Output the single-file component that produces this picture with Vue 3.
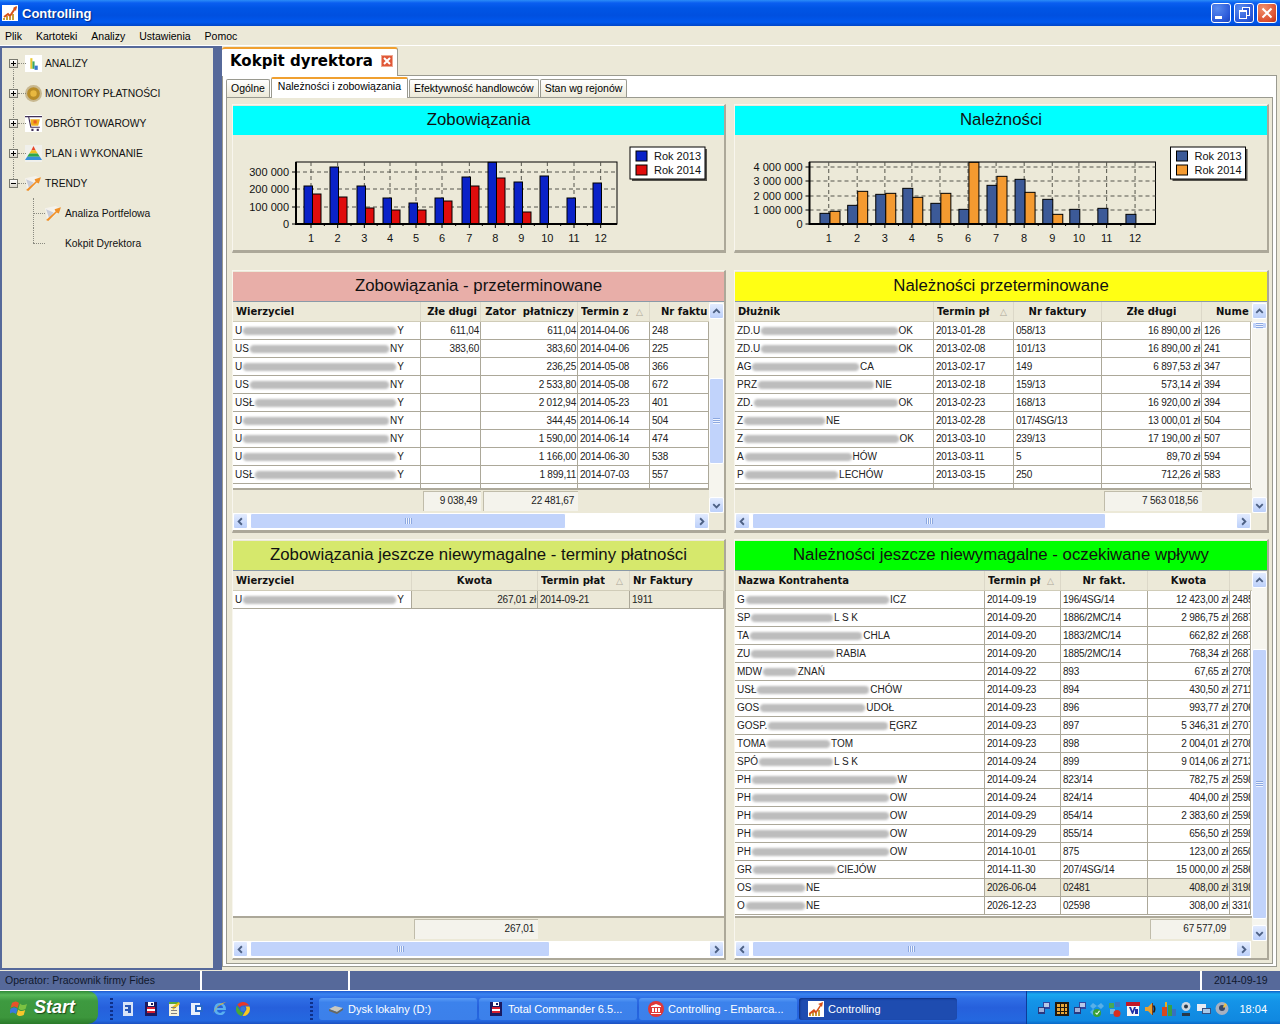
<template>
  <div class="window">
    <header class="titlebar">
      <svg class="title-icon" viewBox="0 0 16 16">
        <rect width="16" height="16" fill="#fff" />
        <path d="M1 13h2v2H1zM4 11h2v4H4zM7 12h2v3H7zM10 9h2v6h-2z" fill="#c8a038" />
        <path d="M2 12l4-3 2 2 6-9" fill="none" stroke="#d85018" stroke-width="2" />
        <path d="M15 1l-1 5-3-3z" fill="#d85018" />
      </svg>
      <span class="title-text">Controlling</span>
      <div class="win-buttons">
        <button class="win-btn"><span class="min-mark"></span></button>
        <button class="win-btn"><span class="max-mark"></span></button>
        <button class="win-btn close">
          <svg viewBox="0 0 12 12"><path d="M1.5 1.5l9 9M10.5 1.5l-9 9" stroke="#fff" stroke-width="2" /></svg>
        </button>
      </div>
    </header>

    <nav class="menubar">
      <span v-for="item in menu" :key="item" class="menu-item">{{ item }}</span>
    </nav>

    <div class="workspace">
      <aside class="tree">
        <div v-for="node in tree" :key="node.label" class="tree-row" :class="{ child: node.child, last: node.last }">
          <span v-if="!node.child" class="expander">
            <i class="hbar"></i><i v-if="node.closed" class="vbar"></i>
          </span>
          <svg v-if="node.icon" class="tree-icon" viewBox="0 0 16 16">
            <path v-for="(p, i) in treeIcons[node.icon]" :key="i" :d="p[1]" :fill="p[0]" />
          </svg>
          <span v-else class="tree-icon"></span>
          <span class="tree-label">{{ node.label }}</span>
        </div>
      </aside>

      <main class="main">
        <div class="doc-tabs">
          <div class="doc-tab">
            <span>Kokpit dyrektora</span>
            <svg class="doc-close" viewBox="0 0 12 12">
              <rect width="12" height="12" fill="#f0a890" />
              <rect x="1" y="1" width="10" height="10" fill="#e05838" />
              <path d="M3 3l6 6M9 3l-6 6" stroke="#fff" stroke-width="2" />
            </svg>
          </div>
        </div>

        <section class="page">
          <div class="sub-tabs">
            <span v-for="tab in subTabs" :key="tab.label" class="sub-tab" :class="{ active: tab.active }">{{ tab.label }}</span>
          </div>

          <div class="dashboard">
            <article v-for="chart in charts" :key="chart.title" class="panel chart-panel">
              <h3 class="panel-title" :style="{ background: chart.color }">{{ chart.title }}</h3>
              <svg class="chart" :viewBox="chart.viewBox">
                <rect :x="chart.plot[0]" y="162" :width="chart.plot[1] - chart.plot[0]" height="62" fill="none" stroke="#000" />
                <line v-for="y in chart.yTicks" :key="'g' + y.label" :x1="chart.plot[0]" :x2="chart.plot[1]" :y1="y.y" :y2="y.y" class="grid-line" />
                <line v-for="x in chart.months" :key="'v' + x.label" :x1="x.x" :x2="x.x" y1="162" y2="224" class="grid-line" />
                <g v-for="bar in chart.bars" :key="bar.key">
                  <rect :x="bar.x" :y="bar.y" :width="bar.w" :height="224 - bar.y" :fill="bar.fill" stroke="#000" stroke-width="1" />
                </g>
                <line v-for="x in chart.months" :key="'t' + x.label" :x1="x.x" :x2="x.x" y1="224" y2="228" stroke="#000" />
                <line v-for="x in chart.minor" :key="'m' + x" :x1="x" :x2="x" y1="224" y2="226" stroke="#000" />
                <line v-for="y in chart.yTicks" :key="'k' + y.label" :x1="chart.plot[0] - 4" :x2="chart.plot[0]" :y1="y.y" :y2="y.y" stroke="#000" />
                <path :d="`M${chart.plot[0]} 162V224H${chart.plot[1]}`" fill="none" stroke="#000" stroke-width="2" />
                <text v-for="y in chart.yTicks" :key="'l' + y.label" :x="chart.plot[0] - 7" :y="y.y + 4" text-anchor="end" class="axis-text">{{ y.label }}</text>
                <text v-for="x in chart.months" :key="'n' + x.label" :x="x.x" y="242" text-anchor="middle" class="axis-text">{{ x.label }}</text>
                <g>
                  <rect :x="chart.legendX + 2" y="149" :width="chart.legendW" height="32" fill="#55534c" />
                  <rect :x="chart.legendX" y="147" :width="chart.legendW" height="32" fill="#fff" stroke="#000" />
                  <rect :x="chart.legendX + 6" y="151" width="11" height="10" :fill="chart.colors[0]" stroke="#000" />
                  <rect :x="chart.legendX + 6" y="165" width="11" height="10" :fill="chart.colors[1]" stroke="#000" />
                  <text :x="chart.legendX + 24" y="160" class="axis-text">Rok 2013</text>
                  <text :x="chart.legendX + 24" y="174" class="axis-text">Rok 2014</text>
                </g>
              </svg>
            </article>

            <article v-for="table in tables" :key="table.title" class="panel table-panel" :class="table.rowClass">
              <h3 class="panel-title" :style="{ background: table.color }">{{ table.title }}</h3>
              <div class="tbl">
                <div class="tbl-main">
                  <div class="tbl-head" :style="gridOf(table)">
                    <div v-for="col in table.cols" :key="col.label" class="th" :class="col.head">
                      <span class="th-label">{{ col.label }}</span>
                      <span v-if="col.sort" class="sort-mark">△</span>
                    </div>
                  </div>
                  <div class="tbl-body">
                    <div v-for="(row, r) in table.rows" :key="r" class="tr" :class="{ selected: r === table.selected }" :style="gridOf(table)">
                      <div class="td name">
                        <span class="masked" :style="{ width: row[0][2] + 'px' }">
                          <span>{{ row[0][0] }}</span><i class="smear"></i><span>{{ row[0][1] }}</span>
                        </span>
                      </div>
                      <div v-for="(cell, c) in row.slice(1)" :key="c" class="td" :class="table.cols[c + 1].align">{{ cell }}</div>
                    </div>
                  </div>
                  <div class="tbl-foot" :style="gridOf(table)">
                    <div v-for="(col, c) in table.cols" :key="c" class="foot-slot">
                      <span v-if="table.totals[c]" class="foot-sum">{{ table.totals[c] }}</span>
                    </div>
                  </div>
                </div>
                <div v-if="table.vthumb" class="vscroll">
                  <span class="sb-btn">
                    <svg viewBox="0 0 14 14"><path d="M3.5 8.5L7 5l3.5 3.5" class="chev" /></svg>
                  </span>
                  <div class="vtrack">
                    <span class="vthumb" :style="{ marginTop: table.vthumb[0] + 'px', height: table.vthumb[1] + 'px' }"><i></i></span>
                  </div>
                  <span class="sb-btn">
                    <svg viewBox="0 0 14 14"><path d="M3.5 5.5L7 9l3.5-3.5" class="chev" /></svg>
                  </span>
                </div>
              </div>
              <div class="hscroll" :style="{ width: table.hwidth + 'px' }">
                <span class="sb-btn">
                  <svg viewBox="0 0 14 14"><path d="M8.5 3.5L5 7l3.5 3.5" class="chev" /></svg>
                </span>
                <div class="htrack">
                  <span class="hthumb" :style="{ width: table.hthumb + 'px' }"><i></i></span>
                </div>
                <span class="sb-btn">
                  <svg viewBox="0 0 14 14"><path d="M5.5 3.5L9 7l-3.5 3.5" class="chev" /></svg>
                </span>
              </div>
            </article>
          </div>
        </section>
      </main>
    </div>

    <footer class="statusbar">
      <span class="status-cell op">Operator: Pracownik firmy Fides</span>
      <span class="status-cell mid"></span>
      <span class="status-cell fill"></span>
      <span class="status-cell date">2014-09-19</span>
    </footer>

    <div class="taskbar">
      <button class="start">
        <svg class="flag" viewBox="0 0 20 20">
          <path d="M2 5c3-2 5-2 7 0l-1.5 5c-2-2-4-2-7 0z" fill="#e8522a" />
          <path d="M10 5.5c2 2 4 2 7 .5l-1.5 5c-3 1.5-5 1.5-7-.5z" fill="#7cc242" />
          <path d="M.5 11c3-2 5-2 7 0L6 16c-2-2-4-2-7 0z" fill="#3a7ae0" />
          <path d="M8.2 11.5c2 2 4 2 7 .5l-1.5 5c-3 1.5-5 1.5-7-.5z" fill="#f6c62c" />
        </svg>
        <span>Start</span>
      </button>
      <span class="grip first"></span>
      <div class="quick">
        <svg v-for="(icon, i) in quickIcons" :key="i" class="q-icon" viewBox="0 0 16 16">
          <path v-for="(p, j) in icon" :key="j" :d="p[1]" :fill="p[0]" />
        </svg>
      </div>
      <span class="grip"></span>
      <div class="tasks">
        <div v-for="task in tasks" :key="task.label" class="task" :class="{ active: task.active }">
          <svg class="task-icon" viewBox="0 0 16 16">
            <path v-for="(p, j) in task.icon" :key="j" :d="p[1]" :fill="p[0]" />
          </svg>
          <span class="task-label">{{ task.label }}</span>
        </div>
      </div>
      <div class="tray">
        <svg v-for="(icon, i) in trayIcons" :key="i" class="tray-icon" viewBox="0 0 16 16">
          <path v-for="(p, j) in icon" :key="j" :d="p[1]" :fill="p[0]" />
        </svg>
        <span class="clock">18:04</span>
      </div>
    </div>
  </div>
</template>

<script setup>
const menu = ['Plik', 'Kartoteki', 'Analizy', 'Ustawienia', 'Pomoc']

const tree = [
  { label: 'ANALIZY', icon: 'analizy', closed: true },
  { label: 'MONITORY PŁATNOŚCI', icon: 'monitor', closed: true },
  { label: 'OBRÓT TOWAROWY', icon: 'cart', closed: true },
  { label: 'PLAN i WYKONANIE', icon: 'plan', closed: true },
  { label: 'TRENDY', icon: 'trend' },
  { label: 'Analiza Portfelowa', icon: 'trend', child: true },
  { label: 'Kokpit Dyrektora', child: true, last: true }
]

const treeIcons = {
  analizy: [
    ['#fff', 'M0 0h16v16H0z'],
    ['#e8c830', 'M5 3h2v10H5z'],
    ['#38a860', 'M7 6h2v7H7z'],
    ['#3878d0', 'M9 10h3v4H9z']
  ],
  monitor: [
    ['#c8b890', 'M8 0a8 8 0 1 0 0 16A8 8 0 0 0 8 0z'],
    ['#b88c28', 'M8 2a6 6 0 1 0 0 12A6 6 0 0 0 8 2z'],
    ['#e8b840', 'M8 5a3 3 0 1 0 0 6 3 3 0 0 0 0-6z']
  ],
  cart: [
    ['#fff', 'M0 0h16v16H0z'],
    ['#403058', 'M0 1h16v1H0zM3 2h1l2 9h8v1H5zM6 13h2v2H6zM11 13h2v2h-2z'],
    ['#f0b020', 'M5 4h9l-1.5 6H6z'],
    ['#e86020', 'M8 5h3v3H8z']
  ],
  plan: [
    ['#f0f0ec', 'M0 0h16v16H0z'],
    ['#e84828', 'M8 1l2 4H6z'],
    ['#f0c020', 'M6 5h4l2 3H4z'],
    ['#30a848', 'M4 8h8l2 3H2z'],
    ['#3890d8', 'M2 11h12l2 3H0z']
  ],
  trend: [
    ['#f4f2ec', 'M0 3l10-2 4 2-6 8-6 3z'],
    ['#c8ccd8', 'M1 4l7 3-4 6z'],
    ['#f09028', 'M1 14l9-8-1-2 6-2-2 6-2-1-8 8z']
  ]
}

const subTabs = [
  { label: 'Ogólne' },
  { label: 'Należności i zobowiązania', active: true },
  { label: 'Efektywność handlowców' },
  { label: 'Stan wg rejonów' }
]

// charts are kept in screen coordinates, viewBox maps them onto the panel body
function buildChart(cfg) {
  const bars = []
  cfg.starts.forEach((x, i) => {
    bars.push({ key: 'a' + i, x, y: cfg.first[i], w: cfg.barW, fill: cfg.colors[0] })
    if (cfg.second[i]) bars.push({ key: 'b' + i, x: x + cfg.barW, y: cfg.second[i], w: cfg.barW, fill: cfg.colors[1] })
  })
  const months = cfg.centers.map((x, i) => ({ x, label: String(i + 1) }))
  const minor = []
  for (let i = 0; i < months.length - 1; i++) minor.push((months[i].x + months[i + 1].x) / 2)
  return { ...cfg, bars, months, minor }
}

const leftX = v => 226 + v / 3
const rightX = v => 730 + v / 2.85
const topY = v => 100 + v / 3

const charts = [
  buildChart({
    title: 'Zobowiązania',
    color: '#00ffff',
    viewBox: '233 135 491 115',
    plot: [296, 617],
    colors: ['#0a22c8', '#e00c0c'],
    legendX: 630,
    legendW: 75,
    barW: 8.5,
    yTicks: [
      { y: 172, label: '300 000' },
      { y: 189, label: '200 000' },
      { y: 207, label: '100 000' },
      { y: 224, label: '0' }
    ],
    starts: [234, 312, 393, 471, 549, 627, 708, 786, 864, 942, 1023, 1101].map(leftX),
    centers: [255, 335, 415, 492, 570, 648, 730, 808, 886, 964, 1044, 1124].map(leftX),
    first: [258, 201, 258, 294, 309, 294, 231, 187, 246, 228, 294, 249].map(topY),
    second: [282, 291, 324, 330, 330, 303, 258, 234, 336].map(topY)
  }),
  buildChart({
    title: 'Należności',
    color: '#00ffff',
    viewBox: '735 135 531 115',
    plot: [809, 1155],
    colors: ['#3c5a98', '#f49a30'],
    legendX: 1170,
    legendW: 75,
    barW: 10,
    yTicks: [
      { y: 167, label: '4 000 000' },
      { y: 181, label: '3 000 000' },
      { y: 196, label: '2 000 000' },
      { y: 210, label: '1 000 000' },
      { y: 224, label: '0' }
    ],
    starts: [255, 334, 414, 491, 571, 651, 731, 811, 890, 967, 1047, 1127].map(rightX),
    centers: [280, 361, 440, 517, 597, 677, 757, 837, 917, 993, 1072, 1153].map(rightX),
    first: [340, 316, 283, 265, 310, 328, 256, 238, 298, 328, 325, 343].map(topY),
    second: [334, 274, 280, 292, 280, 187, 229, 277, 343].map(topY)
  })
]

const tables = [
  {
    title: 'Zobowiązania - przeterminowane',
    color: '#e8aea8',
    rowClass: 'row-mid',
    cols: [
      { label: 'Wierzyciel', w: 188, head: 'left' },
      { label: 'Złe długi', w: 60, align: 'right', head: 'right' },
      { label: 'Zator  płatniczy', w: 97, align: 'right', head: 'right' },
      { label: 'Termin z', w: 72, sort: true, head: 'left' },
      { label: 'Nr faktu', w: 59, head: 'clip' }
    ],
    rows: [
      [['U', 'Y', 169], '611,04', '611,04', '2014-04-06', '248'],
      [['US', 'NY', 169], '383,60', '383,60', '2014-04-06', '225'],
      [['U', 'Y', 169], '', '236,25', '2014-05-08', '366'],
      [['US', 'NY', 169], '', '2 533,80', '2014-05-08', '672'],
      [['USŁ', 'Y', 169], '', '2 012,94', '2014-05-23', '401'],
      [['U', 'NY', 169], '', '344,45', '2014-06-14', '504'],
      [['U', 'NY', 169], '', '1 590,00', '2014-06-14', '474'],
      [['U', 'Y', 169], '', '1 166,00', '2014-06-30', '538'],
      [['USŁ', 'Y', 169], '', '1 899,11', '2014-07-03', '557'],
      [['', '', 0], '', '', '', '']
    ],
    totals: { 1: '9 038,49', 2: '22 481,67' },
    vthumb: [59, 86],
    hwidth: 476,
    hthumb: 316
  },
  {
    title: 'Należności przeterminowane',
    color: '#ffff14',
    rowClass: 'row-mid',
    cols: [
      { label: 'Dłużnik', w: 199, head: 'left' },
      { label: 'Termin pł', w: 80, sort: true, head: 'left' },
      { label: 'Nr faktury', w: 88, head: 'center' },
      { label: 'Złe długi', w: 100, align: 'right', head: 'center' },
      { label: 'Nume', w: 49, head: 'clip far' }
    ],
    rows: [
      [['ZD.U', 'OK', 176], '2013-01-28', '058/13', '16 890,00 zł', '126'],
      [['ZD.U', 'OK', 176], '2013-02-08', '101/13', '16 890,00 zł', '241'],
      [['AG', 'CA', 137], '2013-02-17', '149', '6 897,53 zł', '347'],
      [['PRZ', 'NIE', 155], '2013-02-18', '159/13', '573,14 zł', '394'],
      [['ZD.', 'OK', 176], '2013-02-23', '168/13', '16 920,00 zł', '394'],
      [['Z', 'NE', 103], '2013-02-28', '017/4SG/13', '13 000,01 zł', '504'],
      [['Z', 'OK', 177], '2013-03-10', '239/13', '17 190,00 zł', '507'],
      [['A', 'HÓW', 140], '2013-03-11', '5', '89,70 zł', '594'],
      [['P', 'LECHÓW', 146], '2013-03-15', '250', '712,26 zł', '583'],
      [['', '', 0], '', '', '', '']
    ],
    totals: { 3: '7 563 018,56' },
    vthumb: [3, 7],
    hwidth: 516,
    hthumb: 354
  },
  {
    title: 'Zobowiązania jeszcze niewymagalne - terminy płatności',
    color: '#d6e86c',
    rowClass: 'row-low',
    cols: [
      { label: 'Wierzyciel', w: 179, head: 'left' },
      { label: 'Kwota', w: 126, align: 'right', head: 'center' },
      { label: 'Termin płat', w: 92, sort: true, head: 'left' },
      { label: 'Nr Faktury', w: 94, head: 'left' }
    ],
    rows: [[['U', 'Y', 169], '267,01 zł', '2014-09-21', '1911']],
    selected: 0,
    totals: { 1: '267,01' },
    hwidth: 491,
    hthumb: 300
  },
  {
    title: 'Należności jeszcze niewymagalne - oczekiwane wpływy',
    color: '#00ff00',
    rowClass: 'row-low',
    cols: [
      { label: 'Nazwa Kontrahenta', w: 250, head: 'left' },
      { label: 'Termin pł', w: 76, sort: true, head: 'left' },
      { label: 'Nr fakt.', w: 87, head: 'center' },
      { label: 'Kwota', w: 82, align: 'right', head: 'center' },
      { label: '', w: 21, head: 'clip' }
    ],
    rows: [
      [['G', 'ICZ', 169], '2014-09-19', '196/4SG/14', '12 423,00 zł', '2485'],
      [['SP', 'L S K', 121], '2014-09-20', '1886/2MC/14', '2 986,75 zł', '2687'],
      [['TA', 'CHLA', 153], '2014-09-20', '1883/2MC/14', '662,82 zł', '2687'],
      [['ZU', 'RABIA', 129], '2014-09-20', '1885/2MC/14', '768,34 zł', '2687'],
      [['MDW', 'ZNAŃ', 88], '2014-09-22', '893', '67,65 zł', '2705'],
      [['USŁ', 'CHÓW', 165], '2014-09-23', '894', '430,50 zł', '2711'],
      [['GOS', 'UDOŁ', 157], '2014-09-23', '896', '993,77 zł', '2706'],
      [['GOSP.', 'ĘGRZ', 180], '2014-09-23', '897', '5 346,31 zł', '2707'],
      [['TOMA', 'TOM', 116], '2014-09-23', '898', '2 004,01 zł', '2708'],
      [['SPÓ', 'L S K', 121], '2014-09-24', '899', '9 014,06 zł', '2713'],
      [['PH', 'W', 170], '2014-09-24', '823/14', '782,75 zł', '2598'],
      [['PH', 'OW', 170], '2014-09-24', '824/14', '404,00 zł', '2598'],
      [['PH', 'OW', 170], '2014-09-29', '854/14', '2 383,60 zł', '2598'],
      [['PH', 'OW', 170], '2014-09-29', '855/14', '656,50 zł', '2598'],
      [['PH', 'OW', 170], '2014-10-01', '875', '123,00 zł', '2650'],
      [['GR', 'CIEJÓW', 139], '2014-11-30', '207/4SG/14', '15 000,00 zł', '2586'],
      [['OS', 'NE', 83], '2026-06-04', '02481', '408,00 zł', '3198'],
      [['O', 'NE', 83], '2026-12-23', '02598', '308,00 zł', '3310']
    ],
    selected: 16,
    totals: { 3: '67 577,09' },
    vthumb: [61, 270],
    hwidth: 516,
    hthumb: 318
  }
]

function gridOf(table) {
  return { gridTemplateColumns: table.cols.map(c => c.w + 'px').join(' ') }
}

const floppy = [
  ['#1a1a60', 'M2 1h12v14H2z'],
  ['#fff', 'M5 1h6v4H5zM4 8h8v2H4z'],
  ['#d82030', 'M4 10h8v2H4zM4 6h8v2H4z'],
  ['#1a1a60', 'M8 2h2v2H8z']
]
const appIcon = [
  ['#fff', 'M0 0h16v16H0z'],
  ['#c8a038', 'M1 13h2v2H1zM4 11h2v4H4zM7 12h2v3H7zM10 9h2v6h-2z'],
  ['#d85018', 'M1 12l5-4 2 2 4-6-2-1 5-2-1 5-1-1-5 8-2-2-5 3z']
]
const netIcon = [
  ['#3048a0', 'M7 1h7v7H7z'],
  ['#b8c8e8', 'M8 2h5v4H8z'],
  ['#283880', 'M2 6h7v7H2z'],
  ['#a0b0d8', 'M3 7h5v4H3z']
]

const quickIcons = [
  [['#d8e4f8', 'M3 1h10v14H3z'], ['#2858b8', 'M5 4h6v2H5zM5 8h6v2H5zM8 5h3v7H8z']],
  floppy,
  [['#f4f0d8', 'M3 2h10v13H3z'], ['#58a838', 'M3 1h10v2H3z'], ['#e8c020', 'M6 6l7-5 1 2-7 6z'], ['#808080', 'M5 6h5v1H5zM5 9h6v1H5zM5 12h6v1H5z']],
  [['#e8f0fc', 'M2 2h9v12H2z'], ['#2868c8', 'M6 4h8v7H6z'], ['#f8f8f8', 'M8 6h4v3H8z']],
  [['#5ab0f0', 'M8 2a6 6 0 1 0 5.5 8.5h-3a3 3 0 0 1-5.5-1.5h9A6 6 0 0 0 8 2zM5 7a3 3 0 0 1 6 0z'], ['#e0b030', 'M1 13c2-7 8-12 14-12-2 0-3 1-4 2-4 1-8 5-10 10z']],
  [['#e83828', 'M8 1a7 7 0 0 1 6.1 3.5H8A3.5 3.5 0 0 0 4.8 6.5L2.3 3.5A7 7 0 0 1 8 1z'], ['#48a838', 'M2 4.5l3 5a3.5 3.5 0 0 0 3.5 2L6.5 15A7 7 0 0 1 2 4.5z'], ['#f8c820', 'M15 8a7 7 0 0 1-7.5 7l3-5a3.5 3.5 0 0 0 0-4.5h4A7 7 0 0 1 15 8z'], ['#3878d8', 'M8 5.5a2.5 2.5 0 1 0 0 5 2.5 2.5 0 0 0 0-5z']]
]

const tasks = [
  { label: 'Dysk lokalny (D:)', icon: [['#c8c8c0', 'M1 8l6-3 8 2-6 4z'], ['#686860', 'M1 8l8 3v2l-8-3zM9 11l6-4v2l-6 4z']] },
  { label: 'Total Commander 6.5...', icon: floppy },
  { label: 'Controlling - Embarca...', icon: [['#e03838', 'M8 0a8 8 0 1 0 0 16A8 8 0 0 0 8 0z'], ['#fff', 'M3 5l5-2 5 2v1H3zM4 7h2v4H4zM7 7h2v4H7zM10 7h2v4h-2zM3 12h10v1H3z']] },
  { label: 'Controlling', icon: appIcon, active: true }
]

const trayIcons = [
  netIcon,
  [['#201810', 'M1 1h14v14H1z'], ['#e8a838', 'M3 3h3v3H3zM7 3h3v3H7zM11 3h2v3h-2zM3 7h3v3H3zM7 7h3v3H7zM11 7h2v3h-2zM3 11h3v2H3zM7 11h3v2H7zM11 11h2v2h-2z']],
  netIcon,
  [['#58b0e8', 'M4 2l4 3-4 3-3-3zM12 2l3 3-3 3-4-3zM4 8l4 3-4 3-3-3z'], ['#38a038', 'M8 16a4 4 0 1 0 0-8 4 4 0 0 0 0 8z'], ['#fff', 'M6 12l2 2 3-4-1-.5-2 3-1-1z']],
  [['#48a858', 'M2 2h5v5H2z'], ['#3878c8', 'M8 1h5v5H8z'], ['#70b8e0', 'M3 8h5v5H3z'], ['#d83020', 'M10 9a3.5 3.5 0 1 0 0 7 3.5 3.5 0 0 0 0-7z']],
  [['#c01828', 'M1 1h14v4H1z'], ['#f8f8f8', 'M2 5h12v10H2z'], ['#2030a8', 'M4 6l3 7h1l3-7-2 0-1.5 4L6 6zM10 8h3v5h-3z']],
  [['#e8a030', 'M2 6h3l4-4v12l-4-4H2z'], ['#803818', 'M9 2h1v12H9z'], ['#281810', 'M11 4c2 2 2 6 0 8l-1-1c1-2 1-4 0-6z']],
  [['#e8b020', 'M4 1h2v5H4z'], ['#d84820', 'M1 6h5v9H1z'], ['#38a048', 'M7 4h4v11H7z'], ['#3870c0', 'M11 8h4v7h-4z']],
  [['#d0d8e0', 'M8 1a4.5 4.5 0 1 0 0 9 4.5 4.5 0 0 0 0-9z'], ['#283848', 'M8 3.5a2 2 0 1 0 0 4 2 2 0 0 0 0-4zM4 12h8v3H4z']],
  [['#e8ecf4', 'M1 3h9v7H1z'], ['#385080', 'M6 7h9v6H6z'], ['#a8c8e8', 'M7 8h7v4H7z']],
  [['#a8b0c0', 'M8 1a6.5 6.5 0 1 0 0 13A6.5 6.5 0 0 0 8 1z'], ['#384868', 'M8 4a3 3 0 1 0 0 6 3 3 0 0 0 0-6z'], ['#f0c040', 'M11 2l2 2-3 3-1-1z']]
]
</script>

<style>
html, body {
  margin: 0;
  background: #ece9d8;
}
</style>

<style scoped>
.window {
  width: 1280px;
  height: 1024px;
  overflow: hidden;
  display: flex;
  flex-direction: column;
  background: #ece9d8;
  font-family: "Liberation Sans", Arial, sans-serif;
  font-size: 11px;
  color: #000;
}

.titlebar {
  height: 26px;
  flex: none;
  display: flex;
  align-items: center;
  padding: 0 3px 0 2px;
  box-sizing: border-box;
  background: linear-gradient(180deg, #2b8cf8 0, #0a5ef0 3px, #0055e5 8px, #0050e0 60%, #0058ee 85%, #0046c8 100%);
}

.title-icon {
  width: 16px;
  height: 16px;
  margin-right: 4px;
}

.title-text {
  color: #fff;
  font-family: "Liberation Sans", Arial, sans-serif;
  font-weight: 700;
  font-size: 13px;
  text-shadow: 1px 1px 1px #0a2a80;
}

.win-buttons {
  margin-left: auto;
  display: flex;
  gap: 3px;
}

.win-btn {
  width: 20px;
  height: 20px;
  padding: 0;
  border: 1px solid #fff;
  border-radius: 3px;
  background: radial-gradient(circle at 30% 25%, #5a8cf0, #2a58d8 70%, #1c44b8);
  display: flex;
  align-items: center;
  justify-content: center;
  position: relative;
}

.win-btn.close {
  background: radial-gradient(circle at 30% 25%, #f0906c, #dc5030 70%, #b83018);
}

.win-btn svg {
  width: 12px;
  height: 12px;
}

.min-mark {
  width: 7px;
  height: 3px;
  background: #fff;
  margin: 9px 5px 0 0;
}

.max-mark {
  width: 6px;
  height: 6px;
  border: 1px solid #fff;
  border-top-width: 2px;
  margin: 3px 2px 0 0;
  box-shadow: 3px -3px 0 -1px #2a58d8, 3px -3px 0 0 #fff;
}

.menubar {
  height: 19px;
  flex: none;
  display: flex;
  align-items: center;
  gap: 14px;
  padding-left: 5px;
  font-size: 10.5px;
  border-bottom: 1px solid #fff;
  box-sizing: content-box;
}

.workspace {
  height: 924px;
  flex: none;
  display: flex;
  background: #56699a;
  box-sizing: border-box;
}

.tree {
  width: 211px;
  margin: 2px 0 2px 2px;
  background: #ece9d8;
  box-sizing: border-box;
}

.tree-row {
  height: 30px;
  display: flex;
  align-items: center;
  padding-left: 7px;
  position: relative;
}

.tree-row::before {
  content: "";
  position: absolute;
  left: 16px;
  top: 15px;
  width: 8px;
  border-top: 1px dotted #8a8a80;
}

.tree-row::after {
  content: "";
  position: absolute;
  left: 11px;
  top: 0;
  height: 30px;
  border-left: 1px dotted #8a8a80;
}

.tree-row:nth-child(1)::after {
  top: 15px;
  height: 15px;
}

.tree-row:nth-child(5)::after {
  height: 11px;
}

.tree-row.child {
  padding-left: 43px;
}

.tree-row.child::before {
  left: 31px;
  width: 12px;
}

.tree-row.child::after {
  left: 31px;
}

.tree-row.last::after {
  height: 15px;
}

.expander {
  width: 9px;
  height: 9px;
  box-sizing: border-box;
  border: 1px solid #7a7a70;
  background: linear-gradient(180deg, #fff, #d8d4c8);
  position: relative;
  z-index: 1;
  margin-right: 7px;
}

.expander .hbar {
  position: absolute;
  left: 1px;
  top: 3px;
  width: 5px;
  height: 1px;
  background: #000;
}

.expander .vbar {
  position: absolute;
  left: 3px;
  top: 1px;
  width: 1px;
  height: 5px;
  background: #000;
}

.tree-icon {
  width: 17px;
  height: 17px;
  margin-right: 3px;
  flex: none;
}

.tree-label {
  white-space: nowrap;
  font-size: 10.3px;
  color: #111;
}

.main {
  width: 1058px;
  margin-left: 9px;
  background: #ece9d8;
  border-top: 1px solid #ece9d8;
  display: flex;
  flex-direction: column;
}

.doc-tabs {
  height: 28px;
  flex: none;
  box-sizing: border-box;
}

.doc-tab {
  width: 176px;
  height: 29px;
  box-sizing: border-box;
  background: #fff;
  border-top: 2px solid #f0a030;
  border-right: 1px solid #9a9a90;
  border-radius: 3px 3px 0 0;
  display: flex;
  align-items: center;
  padding: 0 0 3px 8px;
  font-family: "DejaVu Sans", sans-serif;
  font-weight: 700;
  font-size: 15px;
  position: relative;
}

.doc-close {
  width: 12px;
  height: 12px;
  margin-left: auto;
  margin-right: 4px;
}

.page {
  width: 1055px;
  height: 892px;
  box-sizing: border-box;
  background: #fff;
  border: 1px solid #9a9a90;
  padding: 2px 3px 2px 3px;
  display: flex;
  flex-direction: column;
}

.sub-tabs {
  height: 19px;
  flex: none;
  display: flex;
  align-items: flex-end;
  gap: 1px;
  font-size: 10.5px;
  position: relative;
  z-index: 1;
}

.sub-tab {
  height: 18px;
  line-height: 16px;
  padding: 0 4px;
  box-sizing: border-box;
  background: linear-gradient(180deg, #fff, #ece9d8);
  border: 1px solid #9a9a90;
  border-bottom: none;
  border-radius: 2px 2px 0 0;
  white-space: nowrap;
}

.sub-tab.active {
  height: 21px;
  line-height: 15px;
  background: #fff;
  border-top: 2px solid #f0a030;
  padding: 0 6px;
  margin-bottom: -1px;
}

.dashboard {
  flex: 1;
  display: grid;
  grid-template-columns: 494px 535px;
  grid-template-rows: 149px 263px 421px;
  column-gap: 8px;
  align-content: start;
  padding: 6px 0 0 5px;
  background: #ece9d8;
  border: 1px solid #9a9a90;
}

.panel {
  display: flex;
  flex-direction: column;
  min-width: 0;
  min-height: 0;
  box-sizing: border-box;
  border-top: 1px solid #f8f6ee;
  border-left: 1px solid #f8f6ee;
  border-right: 2px solid #aca899;
  border-bottom: 3px solid #aca899;
  padding-top: 1px;
}

.row-mid {
  margin-top: 17px;
  height: 263px;
}

.row-low {
  margin-top: 23px;
  height: 421px;
  border-bottom-width: 2px;
}

.panel-title {
  margin: 0;
  height: 29px;
  line-height: 28px;
  flex: none;
  text-align: center;
  font-weight: 400;
  font-size: 16.8px;
  color: #111;
}

.chart {
  width: 100%;
  flex: 1;
  min-height: 0;
  display: block;
}

.grid-line {
  stroke: #55554c;
  stroke-dasharray: 4 3;
}

.axis-text {
  font-family: "Liberation Sans", Arial, sans-serif;
  font-size: 11px;
  fill: #111;
}

.tbl {
  flex: 1;
  min-height: 0;
  display: flex;
  border-top: 1px solid #8a9aa8;
}

.tbl-main {
  flex: 1;
  min-width: 0;
  display: flex;
  flex-direction: column;
}

.tbl-head {
  height: 19px;
  flex: none;
  display: grid;
  background: #ece9d8;
  border-bottom: 1px solid #d0ccb8;
  box-sizing: content-box;
  overflow: hidden;
}

.th {
  display: flex;
  align-items: center;
  padding: 0 3px;
  overflow: hidden;
  white-space: pre;
  font-family: "DejaVu Sans", sans-serif;
  font-weight: 700;
  font-size: 10px;
  color: #111;
  border-right: 1px solid #dcd8c8;
  box-sizing: border-box;
}

.th.right {
  justify-content: flex-end;
}

.th.center {
  justify-content: center;
}

.th.clip {
  justify-content: flex-start;
  padding-left: 11px;
  padding-right: 0;
  border-right: none;
}

.th.clip.far {
  padding-left: 14px;
}

.th-label {
  overflow: hidden;
  min-width: 0;
}

.sort-mark {
  flex: none;
  margin-left: auto;
  padding: 0 3px 0 3px;
  font-family: "DejaVu Sans", sans-serif;
  font-weight: 400;
  font-size: 9px;
  color: #aca899;
}

.tbl-body {
  flex: 1;
  min-height: 0;
  overflow: hidden;
  background: #fff;
  border-bottom: 2px solid #aca899;
}

.tr {
  height: 18px;
  display: grid;
}

.td {
  height: 18px;
  line-height: 17px;
  box-sizing: border-box;
  padding: 0 2px;
  overflow: hidden;
  white-space: nowrap;
  border-right: 1px solid #aca899;
  border-bottom: 1px solid #aca899;
  font-size: 10px;
  letter-spacing: -0.2px;
  color: #222;
}

.td.right {
  text-align: right;
  padding-right: 1px;
}

.td.name {
  letter-spacing: 0;
}

.tr.selected .td:not(.name) {
  background: #ece9d8;
}

.masked {
  display: inline-flex;
  align-items: center;
  max-width: 100%;
}

.smear {
  flex: 1;
  height: 8px;
  margin: 0 1px;
  background: repeating-linear-gradient(90deg, #a4a4a4 0 1px, #d6d6d6 1px 2px);
  filter: blur(1px);
  border-radius: 4px;
}

.tbl-foot {
  height: 23px;
  flex: none;
  display: grid;
}

.foot-slot {
  padding: 1px 0 2px 2px;
  box-sizing: border-box;
  min-width: 0;
}

.foot-sum {
  display: block;
  height: 20px;
  line-height: 18px;
  box-sizing: border-box;
  padding-right: 4px;
  text-align: right;
  font-size: 10px;
  letter-spacing: -0.2px;
  color: #222;
  background: #f4f3ec;
  border-left: 1px solid #c0bcaa;
  border-top: 1px solid #c0bcaa;
  white-space: nowrap;
}

.vscroll {
  width: 15px;
  flex: none;
  display: flex;
  flex-direction: column;
  background: #f6f5ee;
  padding-top: 1px;
  box-sizing: border-box;
}

.vtrack {
  flex: 1;
  min-height: 0;
  overflow: hidden;
}

.sb-btn {
  width: 15px;
  height: 16px;
  flex: none;
  display: flex;
  align-items: center;
  justify-content: center;
  box-sizing: border-box;
  background: linear-gradient(180deg, #e2ebfe, #bcd0fa);
  border: 1px solid #fff;
  border-radius: 2px;
}

.sb-btn svg {
  width: 13px;
  height: 13px;
}

.chev {
  fill: none;
  stroke: #4d6185;
  stroke-width: 2;
}

.vthumb,
.hthumb {
  display: flex;
  align-items: center;
  justify-content: center;
  box-sizing: border-box;
  background: #c1d3fb;
  border: 1px solid #fff;
  border-radius: 2px;
}

.vthumb {
  width: 15px;
}

.vthumb i {
  width: 7px;
  height: 6px;
  background: repeating-linear-gradient(180deg, #8ca8e0 0 1px, #eef3fe 1px 2px);
}

.hscroll {
  height: 17px;
  flex: none;
  display: flex;
  align-items: center;
  padding-bottom: 1px;
  box-sizing: border-box;
  background: #fff;
}

.htrack {
  flex: 1;
  min-width: 0;
  height: 16px;
  padding-left: 2px;
}

.hthumb {
  height: 16px;
}

.hthumb i {
  width: 7px;
  height: 6px;
  background: repeating-linear-gradient(90deg, #8ca8e0 0 1px, #eef3fe 1px 2px);
}

.statusbar {
  height: 20px;
  flex: none;
  display: flex;
  margin-top: 1px;
  background: #fff;
  gap: 2px;
  padding-bottom: 1px;
  box-sizing: border-box;
}

.status-cell {
  background: #56699a;
  line-height: 18px;
  padding-left: 5px;
  box-sizing: border-box;
  color: #10182c;
  white-space: nowrap;
  font-size: 10.5px;
}

.status-cell.op {
  width: 200px;
}

.status-cell.mid {
  width: 146px;
}

.status-cell.fill {
  flex: 1;
}

.status-cell.date {
  width: 78px;
  padding-left: 12px;
}

.taskbar {
  flex: 1;
  min-height: 0;
  display: flex;
  align-items: stretch;
  background: linear-gradient(180deg, #1e5ad0 0, #3a84f0 3px, #2f6fe6 7px, #2660dc 50%, #2468e0 90%, #1c50c0 100%);
  position: relative;
}

.start {
  width: 98px;
  flex: none;
  border: none;
  padding: 0 0 0 10px;
  display: flex;
  align-items: center;
  gap: 4px;
  border-radius: 0 10px 10px 0;
  background: linear-gradient(180deg, #2f8a38 0, #58b858 12%, #3e9a40 30%, #3c963c 80%, #2a7a2a 100%);
  color: #fff;
  font-family: "Liberation Sans", Arial, sans-serif;
  font-style: italic;
  font-weight: 700;
  font-size: 18px;
  text-shadow: 1px 1px 1px #1a4a1a;
}

.flag {
  width: 20px;
  height: 20px;
}

.grip {
  width: 3px;
  margin: 7px 0 4px 10px;
  flex: none;
  background: repeating-linear-gradient(180deg, #0e2f88 0 2px, transparent 2px 4px);
}

.grip.first {
  margin-left: 12px;
}

.quick {
  width: 187px;
  flex: none;
  padding: 2px 0 0 7px;
  box-sizing: border-box;
  display: flex;
  align-items: center;
  gap: 7px;
}

.q-icon {
  width: 16px;
  height: 16px;
  flex: none;
}

.tasks {
  width: 640px;
  flex: none;
  margin-left: 6px;
  padding-top: 7px;
  padding-bottom: 4px;
  display: flex;
  gap: 2px;
  box-sizing: border-box;
}

.task {
  width: 158px;
  flex: none;
  display: flex;
  align-items: center;
  gap: 4px;
  padding-left: 9px;
  box-sizing: border-box;
  background: linear-gradient(180deg, #5a9cf6, #3c82ec 20%, #3c80ea);
  border-radius: 3px;
  color: #fff;
  white-space: nowrap;
  font-size: 11px;
}

.task.active {
  background: #1e4cb0;
  box-shadow: inset 1px 1px 2px #0e2f80;
}

.task-icon {
  width: 16px;
  height: 16px;
  flex: none;
}

.tray {
  margin-left: auto;
  width: 254px;
  flex: none;
  display: flex;
  align-items: center;
  padding: 3px 0 0 9px;
  gap: 1.8px;
  box-sizing: border-box;
  background: linear-gradient(180deg, #0c60c8 0, #18a8f0 3px, #1494e8 10px, #1088e0 90%, #0a68c8 100%);
  border-left: 1px solid #0c3c98;
}

.tray-icon {
  width: 16px;
  height: 16px;
  flex: none;
}

.clock {
  margin-left: auto;
  margin-right: 13px;
  color: #fff;
  font-size: 11px;
}
</style>
